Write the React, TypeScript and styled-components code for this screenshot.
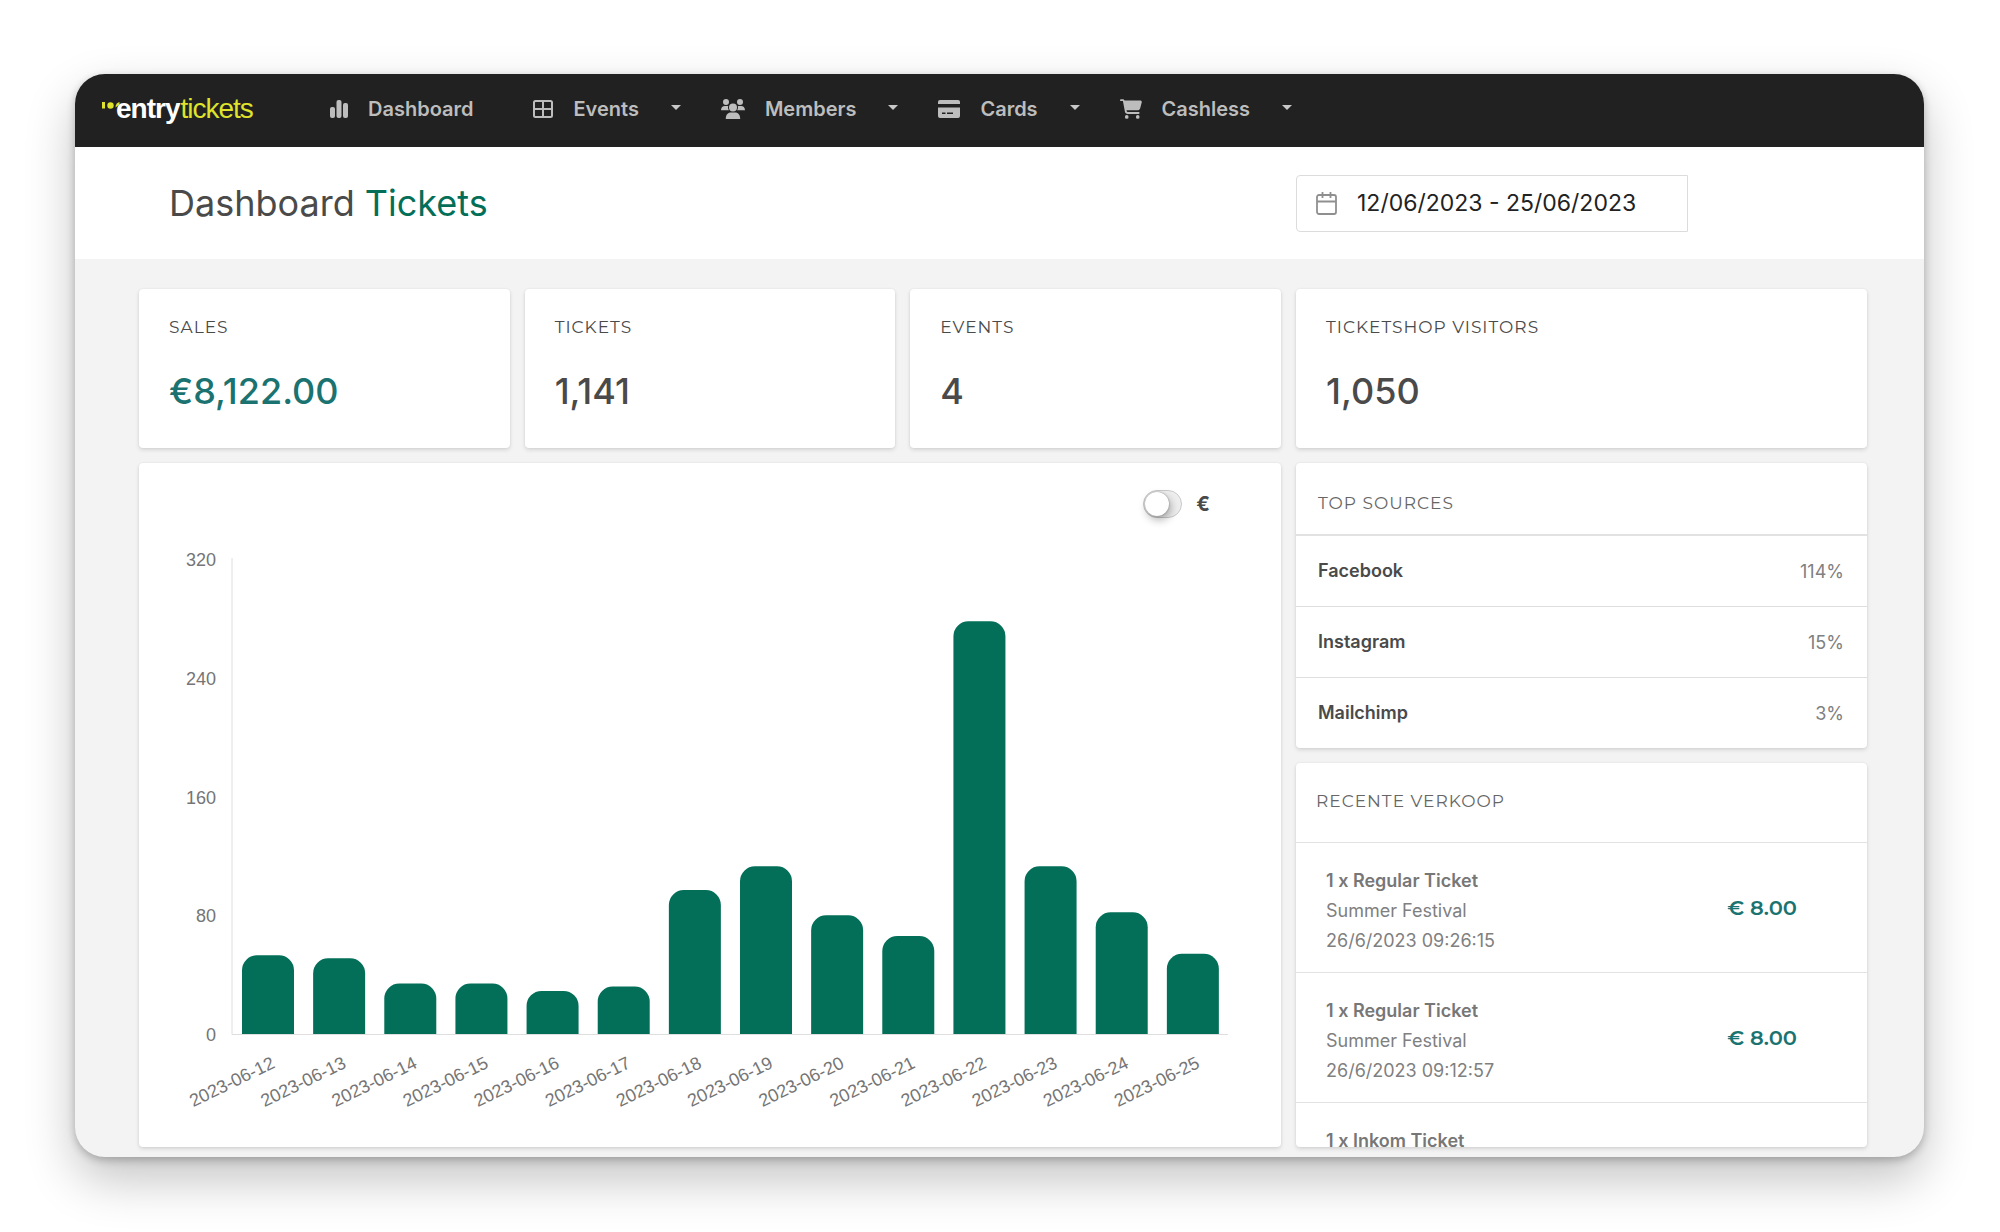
import React from "react";
import styled, { createGlobalStyle } from "styled-components";
import { FaCartShopping } from "react-icons/fa6";

const sans = `Inter, "Liberation Sans", sans-serif`;
const display = `Montserrat, Lato, sans-serif`;
const green = "#036f58";
const teal = "#1a7370";

const GlobalStyle = createGlobalStyle`
  *, *::before, *::after { box-sizing: border-box; }
  body { margin: 0; background: #fff; font-family: ${sans}; color: #4a4a4a; }
  h1, h2, p, ul { margin: 0; padding: 0; }
  ul { list-style: none; }
`;

const Page = styled.div`
  height: 100vh;
  padding: 74px 76px 75px 75px;
`;

const Window = styled.div`
  display: flex;
  flex-direction: column;
  height: 100%;
  overflow: hidden;
  border-radius: 30px;
  background: #f3f3f3;
  box-shadow: 0 3px 8px rgba(0, 0, 0, 0.24), 0 22px 50px rgba(0, 0, 0, 0.24);
`;

const NavBar = styled.nav`
  display: flex;
  align-items: center;
  flex: none;
  height: 73px;
  padding: 0 27px 4px;
  background: #212121;
`;

const Logo = styled.a`
  display: flex;
  align-items: center;
  width: 228px;
  color: #fff;
  font: 700 28px/34px "Liberation Sans", Arial, sans-serif;
  letter-spacing: -1px;
  text-decoration: none;
`;

const LogoMark = styled.svg`
  width: 18px;
  height: 14px;
  margin-right: -4px;
`;

const LogoAccent = styled.span`
  margin-left: 1px;
  color: #dfe32b;
  font-weight: 400;
`;

const Menu = styled.ul`
  display: flex;
  align-items: center;
`;

const menuEntry = `
  display: flex;
  align-items: center;
  gap: 20px;
  padding: 0;
  border: 0;
  background: none;
  color: #bdbdbd;
  font: 600 20px/24px ${sans};
  text-decoration: none;
  cursor: pointer;
`;

const MenuLink = styled.a`
  ${menuEntry}
  margin-right: 60px;
`;

const MenuButton = styled.button`
  ${menuEntry}
  margin-right: 40px;
`;

const Caret = styled.span`
  margin: 0 0 2px 12px;
  border: 5px solid transparent;
  border-top-color: #c8c8c8;
  border-bottom: 0;
`;

const columns = `
  display: grid;
  grid-template-columns: 2fr 1fr;
  column-gap: 15px;
  padding-left: 64px;
  padding-right: 57px;
`;

const TitleBar = styled.header`
  ${columns}
  align-items: center;
  flex: none;
  height: 112px;
  background: #fff;
`;

const Title = styled.h1`
  padding: 0 0 1px 30px;
  font: 400 36px/44px ${sans};
`;

const TitleAccent = styled.span`
  color: ${green};
`;

const DateField = styled.label`
  display: flex;
  align-items: center;
  gap: 20px;
  width: 392px;
  max-width: 100%;
  height: 57px;
  padding: 0 19px;
  border: 1px solid #dcdcdc;
  border-radius: 4px 0 0 4px;
  color: #8f8f8f;
`;

const DateInput = styled.input`
  flex: 1;
  min-width: 0;
  padding: 0;
  border: 0;
  outline: 0;
  background: none;
  color: #222;
  font: 400 23px/30px ${sans};
`;

const Content = styled.main`
  ${columns}
  flex: 1;
  min-height: 0;
  padding-top: 30px;
  padding-bottom: 10px;
`;

const Column = styled.div`
  display: flex;
  flex-direction: column;
  gap: 15px;
  min-width: 0;
  min-height: 0;
`;

const StatRow = styled.div`
  display: grid;
  grid-template-columns: repeat(3, 1fr);
  gap: 15px;
`;

const Card = styled.section`
  border-radius: 4px;
  background: #fff;
  box-shadow: 0 2px 4px rgba(0, 0, 0, 0.12), 0 0 2px rgba(0, 0, 0, 0.08);
`;

const StatCard = styled(Card)`
  flex: none;
  height: 159px;
  padding: 26px 30px;
`;

const StatLabel = styled.h2`
  font: 400 17px/24px ${display};
  letter-spacing: 1px;
`;

const StatValue = styled.p<{ $accent?: boolean }>`
  margin-top: 30px;
  color: ${(p) => (p.$accent ? teal : "#4a4a4a")};
  font: 500 36px/44px ${sans};
`;

const ChartCard = styled(Card)`
  display: flex;
  flex-direction: column;
  flex: 1;
  min-height: 0;
  overflow: hidden;
`;

const ChartTools = styled.label`
  display: flex;
  align-items: center;
  justify-content: flex-end;
  gap: 14px;
  height: 28px;
  margin-top: 27px;
  padding-right: 71px;
  font: 700 20px/24px ${sans};
`;

const Switch = styled.input`
  appearance: none;
  display: flex;
  align-items: center;
  width: 39px;
  height: 28px;
  margin: 0;
  padding: 1px;
  border: 1px solid #c9c9c9;
  border-radius: 14px;
  background: #eee;
  cursor: pointer;

  &::before {
    content: "";
    width: 24px;
    height: 24px;
    border-radius: 50%;
    background: #fff;
    box-shadow: 0 0 2px rgba(0, 0, 0, 0.4), 2px 4px 8px rgba(0, 0, 0, 0.3);
  }

  &:checked::before {
    margin-left: 11px;
  }
`;

const Chart = styled.svg`
  display: block;
  width: 100%;
  margin-top: 22px;
  font: 400 18px/20px "Liberation Sans", Arial, sans-serif;
  fill: #757575;
`;

const ListCard = styled(Card)<{ $fill?: boolean }>`
  flex: ${(p) => (p.$fill ? "1" : "none")};
  min-height: 0;
  overflow: hidden;
`;

const ListTitle = styled.h2<{ $tall?: boolean }>`
  display: flex;
  align-items: center;
  height: ${(p) => (p.$tall ? "80px" : "73px")};
  padding: ${(p) => (p.$tall ? "0 20px 4px" : "8px 22px 0")};
  border-bottom: ${(p) => (p.$tall ? "1px" : "2px")} solid #e2e2e2;
  color: #666;
  font: 400 17px/24px ${display};
  letter-spacing: 1px;
`;

const SourceRow = styled.li`
  display: flex;
  align-items: center;
  justify-content: space-between;
  height: 71px;
  padding: 0 23px 0 22px;
  border-bottom: 1px solid #dedede;
  font: 600 18px/24px ${sans};

  &:last-child {
    height: 70px;
    border-bottom: 0;
  }
`;

const Share = styled.span`
  padding-top: 2px;
  color: #808080;
  font-weight: 400;
`;

const SaleRow = styled.li`
  display: flex;
  align-items: center;
  justify-content: space-between;
  height: 130px;
  padding: 6px 70px 0 30px;
  border-bottom: 1px solid #e2e2e2;
  color: #808080;
  font: 400 18px/30px ${sans};
`;

const SaleDetails = styled.div`
  min-height: 90px;
`;

const SaleName = styled.p`
  color: #777;
  font-weight: 600;
`;

const Price = styled.strong`
  padding-bottom: 6px;
  color: ${teal};
  font: 600 21px/24px ${display};
`;

const BarsIcon = () => (
  <svg width="18" height="18" viewBox="0 0 18 18" fill="currentColor" aria-hidden="true">
    <rect x="0" y="7" width="5" height="11" rx="2" />
    <rect x="6.5" y="0" width="5" height="18" rx="2" />
    <rect x="13" y="3" width="5" height="15" rx="2" />
  </svg>
);

const TableIcon = () => (
  <svg width="20" height="18" viewBox="0 0 20 18" fill="none" stroke="currentColor" strokeWidth="2" aria-hidden="true">
    <rect x="1" y="1" width="18" height="16" rx="1.5" />
    <path d="M10 1v16M1 9h18" />
  </svg>
);

const MembersIcon = () => (
  <svg width="24" height="20" viewBox="0 0 24 20" fill="currentColor" aria-hidden="true">
    <circle cx="5" cy="3" r="3" />
    <circle cx="19" cy="3" r="3" />
    <circle cx="12" cy="8.5" r="4" />
    <path d="M0 11.200C0 8.600 1.600 7 4 7h2.200c.4 0 .7.1 1 .2-.4 1.500-.1 2.900.7 4H0zM24 11.200C24 8.600 22.400 7 20 7h-2.200c-.4 0-.7.1-1 .2.4 1.500.1 2.900-.7 4H24zM4.800 20c0-4 2-6.400 5-6.400h4.400c3 0 5 2.400 5 6.400z" />
  </svg>
);

const CardIcon = () => (
  <svg width="22" height="18" viewBox="0 0 22 18" fill="currentColor" aria-hidden="true">
    <path d="M2 0h18a2 2 0 0 1 2 2v2H0V2a2 2 0 0 1 2-2z" />
    <path fillRule="evenodd" d="M0 7.500h22V16a2 2 0 0 1-2 2H2a2 2 0 0 1-2-2zM4 12.500V14h3.500v-1.500zM9 12.500V14h6v-1.500z" />
  </svg>
);

const CalendarIcon = () => (
  <svg width="21" height="23" viewBox="0 0 21 23" fill="none" stroke="currentColor" strokeWidth="1.8" aria-hidden="true">
    <rect x="1" y="3" width="19" height="19" rx="2" />
    <path d="M1 9.500h19M6.500 0v6M14.500 0v6" />
  </svg>
);

const menus = [
  { name: "Events", icon: <TableIcon /> },
  { name: "Members", icon: <MembersIcon /> },
  { name: "Cards", icon: <CardIcon /> },
  { name: "Cashless", icon: <FaCartShopping size={22} /> },
];

const stats = [
  { label: "SALES", value: "€8,122.00", accent: true },
  { label: "TICKETS", value: "1,141" },
  { label: "EVENTS", value: "4" },
];

const sources = [
  { name: "Facebook", share: "114%" },
  { name: "Instagram", share: "15%" },
  { name: "Mailchimp", share: "3%" },
];

type Sale = { name: string; event?: string; time?: string; price?: string };

const sales: Sale[] = [
  { name: "1 x Regular Ticket", event: "Summer Festival", time: "26/6/2023 09:26:15", price: "€ 8.00" },
  { name: "1 x Regular Ticket", event: "Summer Festival", time: "26/6/2023 09:12:57", price: "€ 8.00" },
  { name: "1 x Inkom Ticket" },
];

const days = [53, 51, 34, 34, 29, 32, 97, 113, 80, 66, 278, 113, 82, 54].map((count, i) => ({
  date: `2023-06-${12 + i}`,
  count,
}));

const plot = { left: 93, right: 1089, top: 19, bottom: 494, max: 320 };
const band = (plot.right - plot.left) / days.length;
const yOf = (count: number) => plot.bottom - (count / plot.max) * (plot.bottom - plot.top);

const SalesChart = () => (
  <Chart viewBox="0 0 1142 600" role="img" aria-label="Tickets per day">
    {[320, 240, 160, 80, 0].map((tick) => (
      <text key={tick} x={77} y={yOf(tick) + 7} textAnchor="end">
        {tick}
      </text>
    ))}
    <path d={`M${plot.left} ${plot.top - 1}V${plot.bottom + 0.5}H${plot.right}`} fill="none" stroke="#dedede" />
    {days.map(({ date, count }, i) => {
      const x = plot.left + band * i + 10;
      const y = yOf(count);
      return (
        <g key={date}>
          <path d={`M${x} ${plot.bottom}V${y + 15}a15 15 0 0 1 15-15h22a15 15 0 0 1 15 15V${plot.bottom}z`} fill={green} />
          <text transform={`translate(${x + 34} ${plot.bottom + 33}) rotate(-26)`} textAnchor="end">
            {date}
          </text>
        </g>
      );
    })}
  </Chart>
);

export default function App() {
  return (
    <>
      <GlobalStyle />
      <Page>
        <Window>
          <NavBar>
            <Logo href="#">
              <LogoMark viewBox="0 0 18 14" fill="#dfe32b" aria-hidden="true">
                <rect x="0" y="0" width="3" height="6.500" />
                <circle cx="8.500" cy="3.500" r="3.2" />
                <path d="M13.500 5.500c0-3 1.500-5 4-5.500v2.500z" />
              </LogoMark>
              entry<LogoAccent>tickets</LogoAccent>
            </Logo>
            <Menu>
              <li>
                <MenuLink href="#">
                  <BarsIcon />
                  Dashboard
                </MenuLink>
              </li>
              {menus.map((menu) => (
                <li key={menu.name}>
                  <MenuButton type="button">
                    {menu.icon}
                    {menu.name}
                    <Caret />
                  </MenuButton>
                </li>
              ))}
            </Menu>
          </NavBar>
          <TitleBar>
            <Title>
              Dashboard <TitleAccent>Tickets</TitleAccent>
            </Title>
            <DateField>
              <CalendarIcon />
              <DateInput aria-label="Date range" defaultValue="12/06/2023 - 25/06/2023" />
            </DateField>
          </TitleBar>
          <Content>
            <Column>
              <StatRow>
                {stats.map((stat) => (
                  <StatCard key={stat.label}>
                    <StatLabel>{stat.label}</StatLabel>
                    <StatValue $accent={stat.accent}>{stat.value}</StatValue>
                  </StatCard>
                ))}
              </StatRow>
              <ChartCard>
                <ChartTools>
                  <Switch type="checkbox" role="switch" />€
                </ChartTools>
                <SalesChart />
              </ChartCard>
            </Column>
            <Column>
              <StatCard>
                <StatLabel>TICKETSHOP VISITORS</StatLabel>
                <StatValue>1,050</StatValue>
              </StatCard>
              <ListCard>
                <ListTitle>TOP SOURCES</ListTitle>
                <ul>
                  {sources.map((source) => (
                    <SourceRow key={source.name}>
                      {source.name}
                      <Share>{source.share}</Share>
                    </SourceRow>
                  ))}
                </ul>
              </ListCard>
              <ListCard $fill>
                <ListTitle $tall>RECENTE VERKOOP</ListTitle>
                <ul>
                  {sales.map((sale, i) => (
                    <SaleRow key={i}>
                      <SaleDetails>
                        <SaleName>{sale.name}</SaleName>
                        {sale.event && <p>{sale.event}</p>}
                        {sale.time && <p>{sale.time}</p>}
                      </SaleDetails>
                      {sale.price && <Price>{sale.price}</Price>}
                    </SaleRow>
                  ))}
                </ul>
              </ListCard>
            </Column>
          </Content>
        </Window>
      </Page>
    </>
  );
}
